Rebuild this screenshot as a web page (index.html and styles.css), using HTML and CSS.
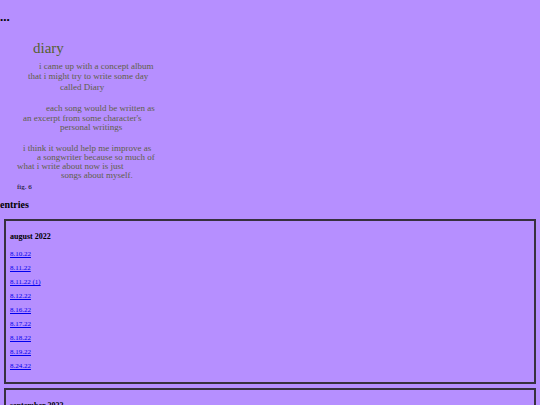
FILE: index.html
```
<!DOCTYPE html>
<html lang="en">
<head>
    <meta charset="UTF-8">
    <meta name="viewport" content="width=device-width, initial-scale=1.0">
    <title>diary</title>
    <link rel="stylesheet" href="styles.css">
</head>
<body>
    <h1>...</h1>

    <figure class="poem">
        <svg width="160" height="150" viewBox="0 0 160 150">
            <text class="poem-title" x="33" y="18">diary</text>
            <text x="39" y="34">i came up with a concept album</text>
            <text x="28" y="44">that i might try to write some day</text>
            <text x="60" y="55">called Diary</text>

            <text x="46" y="76">each song would be written as</text>
            <text x="23" y="86">an excerpt from some character's</text>
            <text x="60" y="95">personal writings</text>

            <text x="23" y="116">i think it would help me improve as</text>
            <text x="37" y="125">a songwriter because so much of</text>
            <text x="17" y="134">what i write about now is just</text>
            <text x="61" y="143">songs about myself.</text>
        </svg>
        <figcaption>fig. 6</figcaption>
    </figure>

    <h2>entries</h2>

    <div class="month">
        <h3>august 2022</h3>
        <p><a href="#">8.10.22</a></p>
        <p><a href="#">8.11.22</a></p>
        <p><a href="#">8.11.22 (1)</a></p>
        <p><a href="#">8.12.22</a></p>
        <p><a href="#">8.16.22</a></p>
        <p><a href="#">8.17.22</a></p>
        <p><a href="#">8.18.22</a></p>
        <p><a href="#">8.19.22</a></p>
        <p><a href="#">8.24.22</a></p>
    </div>

    <div class="month">
        <h3>september 2022</h3>
    </div>
</body>
</html>
```

FILE: styles.css
```
html {
    overflow: hidden;
}
body {
    margin: 0;
    background-color: #b68fff;
    color: #000;
    font-family: "Liberation Serif", "Times New Roman", serif;
    font-size: 7px;
    line-height: 8px;
}
h1 {
    margin: 9px 0 10px;
    font-size: 13px;
    line-height: 16px;
}
h2 {
    margin: 8px 0;
    font-size: 10px;
    line-height: 12px;
}
h3 {
    margin: 10px 0 8px;
    font-size: 8px;
    line-height: 10px;
}
p {
    margin: 0 0 6px;
    line-height: 8px;
}
a {
    color: #0000ee;
}
.poem {
    margin: 0;
}
.poem svg {
    display: block;
    margin-bottom: -2px;
    fill: #5f6048;
    font-size: 9px;
}
.poem .poem-title {
    fill: #556030;
    font-size: 15px;
}
.poem figcaption {
    padding-left: 17px;
}
.month {
    margin: 4px;
    padding: 1px 4px 6px;
    border: 2px solid #37303f;
}
```
